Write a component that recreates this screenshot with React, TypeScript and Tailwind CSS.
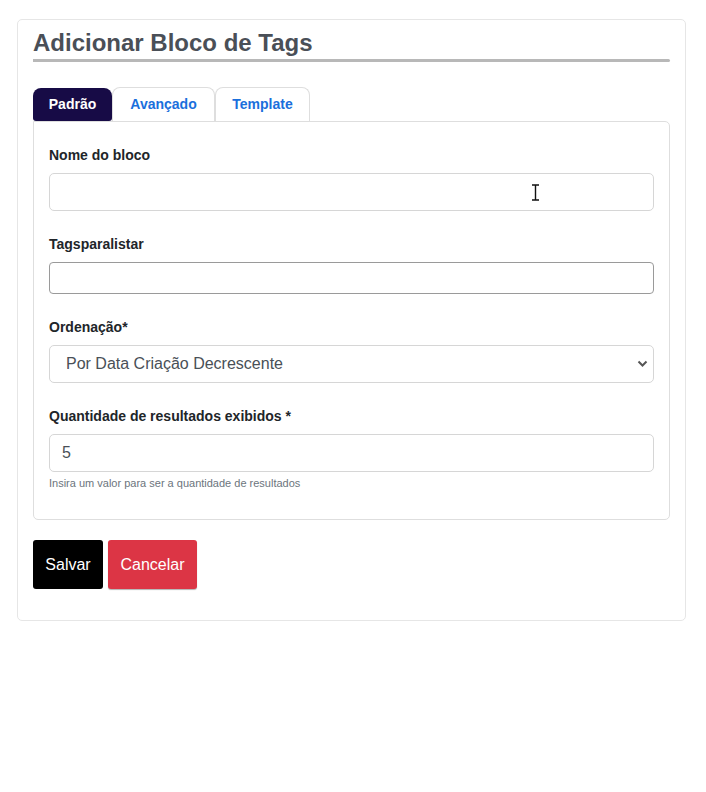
import React from "react";

export default function App() {
  return (
    <div className="min-h-[792px] w-[706px] bg-white" style={{ fontFamily: '"Liberation Sans", Arial, sans-serif' }}>
      <div className="pt-[19px] pl-[17px] pr-[20px]">
        <div className="relative rounded-[5px] border border-[#e6e6e6] bg-white px-[15px] pt-[9px] pb-[31px]">
          <h1 className="text-[24px] font-bold leading-[28px] text-[#4a4f57]">Adicionar Bloco de Tags</h1>
          <div className="mt-[2px] h-[3px] rounded-r-[3px] bg-[#b8b8b8]" />

          <div className="mt-[25px] flex items-end">
            <div className="flex h-[33px] w-[79px] items-center justify-center rounded-t-[8px] rounded-b-[3px] bg-[#170b46] text-[14px] font-bold text-white">
              Padrão
            </div>
            <div className="flex h-[34px] w-[103px] items-center justify-center rounded-t-[8px] border border-b-0 border-[#dedede] text-[14px] font-bold text-[#1a6fdc]">
              Avançado
            </div>
            <div className="flex h-[34px] w-[95px] items-center justify-center rounded-t-[8px] border border-b-0 border-[#dedede] text-[14px] font-bold text-[#1a6fdc]">
              Template
            </div>
          </div>

          <div className="rounded-b-[5px] rounded-tr-[5px] border border-[#dedede] px-[15px] pt-[24px] pb-[29px]">
            <label className="block text-[14px] font-bold leading-[18px] text-[#212529]">Nome do bloco</label>
            <div className="relative mt-[9px]">
              <input className="block h-[38px] w-full rounded-[5px] border border-[#d6d6d6] bg-white px-[12px] outline-none" />
              <svg className="pointer-events-none absolute left-[482px] top-[11px]" width="9" height="17" viewBox="0 0 9 17">
                <path d="M1 1h7M1 16h7M4.5 1v15" stroke="#111" strokeWidth="1.4" fill="none" />
              </svg>
            </div>

            <label className="mt-[24px] block text-[14px] font-bold leading-[18px] text-[#212529]">Tagsparalistar</label>
            <input className="mt-[9px] block h-[32px] w-full rounded-[4px] border border-[#9a9a9a] bg-white px-[8px] outline-none" />

            <label className="mt-[24px] block text-[14px] font-bold leading-[18px] text-[#212529]">Ordenação*</label>
            <div className="relative mt-[9px]">
              <div className="flex h-[38px] w-full items-center rounded-[5px] border border-[#d6d6d6] bg-white pl-[16px] text-[16px] text-[#495057]">
                Por Data Criação Decrescente
              </div>
              <svg className="absolute right-[6px] top-[15px]" width="11" height="8" viewBox="0 0 11 8">
                <path d="M1.5 1.5l4 4 4-4" stroke="#555" strokeWidth="2" fill="none" />
              </svg>
            </div>

            <label className="mt-[24px] block text-[14px] font-bold leading-[18px] text-[#212529]">Quantidade de resultados exibidos *</label>
            <div className="mt-[9px] flex h-[38px] w-full items-center rounded-[5px] border border-[#d6d6d6] bg-white pl-[12px] text-[16px] text-[#495057]">
              5
            </div>
            <p className="mt-[4px] text-[11px] leading-[14px] text-[#6c757d]">Insira um valor para ser a quantidade de resultados</p>
          </div>

          <div className="mt-[20px] flex gap-[5px]">
            <button className="h-[49px] w-[70px] rounded-[3px] bg-black text-[16px] text-white">Salvar</button>
            <button className="h-[49px] w-[89px] rounded-[3px] bg-[#dc3545] text-[16px] text-white shadow-[0_1px_1px_rgba(0,0,0,0.3)]">Cancelar</button>
          </div>
        </div>
      </div>
    </div>
  );
}
